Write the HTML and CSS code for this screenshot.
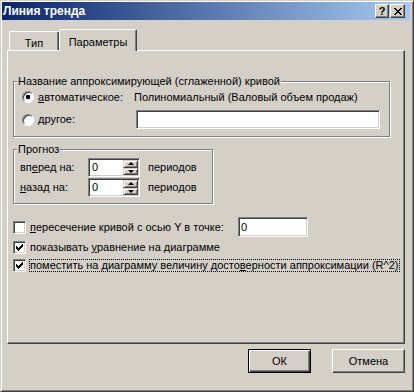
FILE: index.html
```html
<!DOCTYPE html>
<html lang="ru">
<head>
    <meta charset="UTF-8">
    <title>Линия тренда</title>
    <link rel="stylesheet" href="styles.css">
</head>
<body>
    <div class="window">
        <div class="titlebar">
            <span class="title">Линия тренда</span>
            <div class="title-buttons">
                <span class="tb-btn help">?</span>
                <span class="tb-btn close">
                    <svg width="8" height="7" viewBox="0 0 8 7" shape-rendering="crispEdges">
                        <path d="M0 0h2v1H0z M6 0h2v1H6z M1 1h2v1H1z M5 1h2v1H5z M2 2h4v1H2z M3 3h2v1H3z M2 4h4v1H2z M1 5h2v1H1z M5 5h2v1H5z M0 6h2v1H0z M6 6h2v1H6z" fill="#000"/>
                    </svg>
                </span>
            </div>
        </div>

        <div class="tabs">
            <div class="tab">Тип</div>
            <div class="tab active">Параметры</div>
        </div>

        <div class="panel">
            <fieldset class="group name-group">
                <legend>Название аппроксимирующей (сглаженной) кривой</legend>
                <div class="option-row">
                    <span class="opt"><span class="radio checked"></span><span><u>а</u>втоматическое:</span></span>
                    <span class="auto-name">Полиномиальный (Валовый объем продаж)</span>
                </div>
                <div class="option-row second">
                    <span class="opt"><span class="radio"></span><span><u>д</u>ругое:</span></span>
                    <span class="field name-field"></span>
                </div>
            </fieldset>

            <fieldset class="group forecast">
                <legend>Прогноз</legend>
                <div class="forecast-row">
                    <span class="f-label">вп<u>е</u>ред на:</span>
                    <span class="spin">
                        <span class="spin-value">0</span>
                        <span class="spin-btns"><span class="spin-btn up"></span><span class="spin-btn down"></span></span>
                    </span>
                    <span class="periods">периодов</span>
                </div>
                <div class="forecast-row second">
                    <span class="f-label"><u>н</u>азад на:</span>
                    <span class="spin">
                        <span class="spin-value">0</span>
                        <span class="spin-btns"><span class="spin-btn up"></span><span class="spin-btn down"></span></span>
                    </span>
                    <span class="periods">периодов</span>
                </div>
            </fieldset>

            <div class="checks">
                <div class="check-row first">
                    <span class="checkbox"></span>
                    <span class="check-label intercept"><u>п</u>ересечение кривой с осью Y в точке:</span>
                    <span class="field intercept-field">0</span>
                </div>
                <div class="check-row">
                    <span class="checkbox checked">
                        <svg width="7" height="7" viewBox="0 0 7 7" shape-rendering="crispEdges"><path d="M0 2H1V3H2V4H3V3H4V2H5V1H6V0H7V3H6V4H5V5H4V6H3V7H2V6H1V5H0Z" fill="#000"/></svg>
                    </span>
                    <span class="check-label">показывать <u>у</u>равнение на диаграмме</span>
                </div>
                <div class="check-row">
                    <span class="checkbox checked">
                        <svg width="7" height="7" viewBox="0 0 7 7" shape-rendering="crispEdges"><path d="M0 2H1V3H2V4H3V3H4V2H5V1H6V0H7V3H6V4H5V5H4V6H3V7H2V6H1V5H0Z" fill="#000"/></svg>
                    </span>
                    <span class="check-label focused">поместить на диаграмму величину досто<u>в</u>ерности аппроксимации (R^2)</span>
                </div>
            </div>
        </div>

        <div class="buttons">
            <button class="btn default">ОК</button>
            <button class="btn cancel">Отмена</button>
        </div>
    </div>
</body>
</html>
```

FILE: styles.css
```css
:root {
    --face: #d4d0c8;
    --shadow: #808080;
    --dark: #404040;
    --light: #ffffff;
    --title-start: #0a246a;
    --title-end: #a6caf0;
}

body {
    margin: 0;
    background: var(--face);
    font-family: 'Liberation Sans', Arial, sans-serif;
    font-size: 11px;
    line-height: 13px;
    color: #000;
}

.window {
    width: 414px;
    height: 392px;
    box-sizing: border-box;
    border: 1px solid;
    border-color: var(--face) var(--dark) var(--dark) var(--face);
    box-shadow: inset 1px 1px 0 var(--light), inset -1px -1px 0 var(--shadow);
    padding: 1px;
}

/* title bar */
.titlebar {
    width: 408px;
    height: 18px;
    display: flex;
    align-items: center;
    justify-content: space-between;
    padding: 0 5px 0 1px;
    box-sizing: border-box;
    background: linear-gradient(to right, var(--title-start), var(--title-end));
}

.title {
    color: #fff;
    font-weight: bold;
    font-size: 12px;
}

.title-buttons {
    display: flex;
    gap: 1px;
}

.tb-btn {
    height: 14px;
    box-sizing: border-box;
    display: flex;
    align-items: center;
    justify-content: center;
    background: var(--face);
    border: 1px solid;
    border-color: var(--light) var(--dark) var(--dark) var(--light);
    box-shadow: inset -1px -1px 0 var(--shadow);
}

.tb-btn.help {
    width: 14px;
    font-weight: bold;
    font-size: 11px;
    line-height: 11px;
}

.tb-btn.close {
    width: 15px;
}

/* tabs */
.tabs {
    display: flex;
    align-items: flex-end;
    height: 21px;
    margin: 9px 0 0 7px;
}

.tab {
    width: 50px;
    height: 19px;
    box-sizing: border-box;
    padding-top: 5px;
    text-align: center;
    background: var(--face);
    border: 1px solid;
    border-bottom: none;
    border-color: var(--light) var(--dark) transparent var(--light);
    border-radius: 2px 2px 0 0;
    box-shadow: inset -1px 0 0 var(--shadow);
}

.tab.active {
    width: 78px;
    height: 22px;
    padding-top: 6px;
    margin-bottom: -1px;
    position: relative;
    z-index: 1;
}

/* main panel */
.panel {
    width: 398px;
    height: 294px;
    margin-left: 5px;
    box-sizing: border-box;
    border: 1px solid;
    border-color: var(--light) var(--dark) var(--dark) var(--light);
    box-shadow: inset -1px -1px 0 var(--shadow);
    padding: 24px 0 0 5px;
}

.group {
    margin: 0;
    padding: 0 0 7px 0;
    min-width: 0;
    box-sizing: border-box;
    border: 1px solid var(--shadow);
    box-shadow: inset 1px 1px 0 var(--light), 1px 1px 0 var(--light);
}

.group legend {
    margin-left: 3px;
    padding: 0 1px;
    background: var(--face);
    line-height: 13px;
}

.name-group {
    width: 377px;
}

.option-row {
    display: flex;
    align-items: center;
    height: 18px;
    padding-left: 8px;
}

.option-row.second {
    height: 19px;
    margin-top: 4px;
}

.opt {
    width: 112px;
    display: flex;
    align-items: center;
    gap: 4px;
}

.radio {
    width: 12px;
    height: 12px;
    box-sizing: border-box;
    border-radius: 50%;
    border: 1px solid;
    border-color: var(--shadow) var(--light) var(--light) var(--shadow);
    box-shadow: inset 1px 1px 0 var(--dark);
    background: #fff;
}

.radio.checked {
    background: radial-gradient(circle at 5px 5px, #000 2px, #fff 2.6px);
}

.field {
    display: block;
    height: 19px;
    box-sizing: border-box;
    background: #fff;
    border: 1px solid;
    border-color: var(--shadow) var(--light) var(--light) var(--shadow);
    box-shadow: inset 1px 1px 0 var(--dark), inset -1px -1px 0 var(--face);
    padding: 2px 0 0 2px;
}

.name-field {
    width: 244px;
    margin-left: 2px;
}

/* forecast */
.forecast {
    width: 200px;
    margin-top: 6px;
    padding-bottom: 6px;
}

.forecast-row {
    display: flex;
    align-items: center;
    height: 19px;
    margin-top: 2px;
    padding-left: 6px;
}

.forecast-row.second {
    margin-top: 1px;
}

.f-label {
    width: 68px;
}

.spin {
    width: 52px;
    height: 19px;
    box-sizing: border-box;
    display: flex;
    background: #fff;
    border: 1px solid;
    border-color: var(--shadow) var(--light) var(--light) var(--shadow);
    box-shadow: inset 1px 1px 0 var(--dark), inset -1px -1px 0 var(--face);
    padding: 1px 1px 1px 1px;
}

.spin-value {
    flex: 1;
    padding: 1px 0 0 2px;
}

.spin-btns {
    width: 15px;
    display: flex;
    flex-direction: column;
}

.spin-btn {
    flex: 1;
    display: flex;
    align-items: center;
    justify-content: center;
    background: var(--face);
    border: 1px solid;
    border-color: var(--face) var(--dark) var(--dark) var(--face);
    box-shadow: inset 1px 1px 0 var(--light), inset -1px -1px 0 var(--shadow);
}

.spin-btn::after {
    content: '';
    border-left: 3px solid transparent;
    border-right: 3px solid transparent;
}

.spin-btn.up::after {
    border-bottom: 3px solid #000;
}

.spin-btn.down::after {
    border-top: 3px solid #000;
}

.periods {
    margin-left: 8px;
}

/* checkboxes */
.checks {
    margin-top: 13px;
}

.check-row {
    display: flex;
    align-items: center;
    height: 18px;
    gap: 3px;
}

.check-row.first {
    height: 20px;
    margin-bottom: 1px;
}

.checkbox {
    width: 13px;
    height: 13px;
    box-sizing: border-box;
    display: flex;
    align-items: center;
    justify-content: center;
    background: #fff;
    border: 1px solid;
    border-color: var(--shadow) var(--light) var(--light) var(--shadow);
    box-shadow: inset 1px 1px 0 var(--dark), inset -1px -1px 0 var(--face);
}

.check-label {
    border: 1px solid transparent;
    line-height: 11px;
    padding-right: 1px;
}

.check-label.intercept {
    width: 206px;
    box-sizing: border-box;
}

.check-label.focused {
    border: 1px dotted #000;
}

.intercept-field {
    width: 70px;
    height: 20px;
    padding-top: 3px;
}

/* dialog buttons */
.buttons {
    display: flex;
    justify-content: flex-end;
    gap: 21px;
    margin-top: 5px;
    padding-right: 7px;
}

.btn {
    height: 24px;
    padding: 0;
    font-family: 'Liberation Sans', Arial, sans-serif;
    font-size: 11px;
    color: #000;
    background: var(--face);
    border: 1px solid;
    border-color: var(--light) var(--dark) var(--dark) var(--light);
    box-shadow: inset -1px -1px 0 var(--shadow), inset 1px 1px 0 var(--face);
}

.btn.default {
    width: 63px;
    border-color: #000;
    box-shadow: inset 1px 1px 0 var(--light), inset -1px -1px 0 var(--dark), inset -2px -2px 0 var(--shadow);
}

.btn.cancel {
    width: 73px;
}
```
